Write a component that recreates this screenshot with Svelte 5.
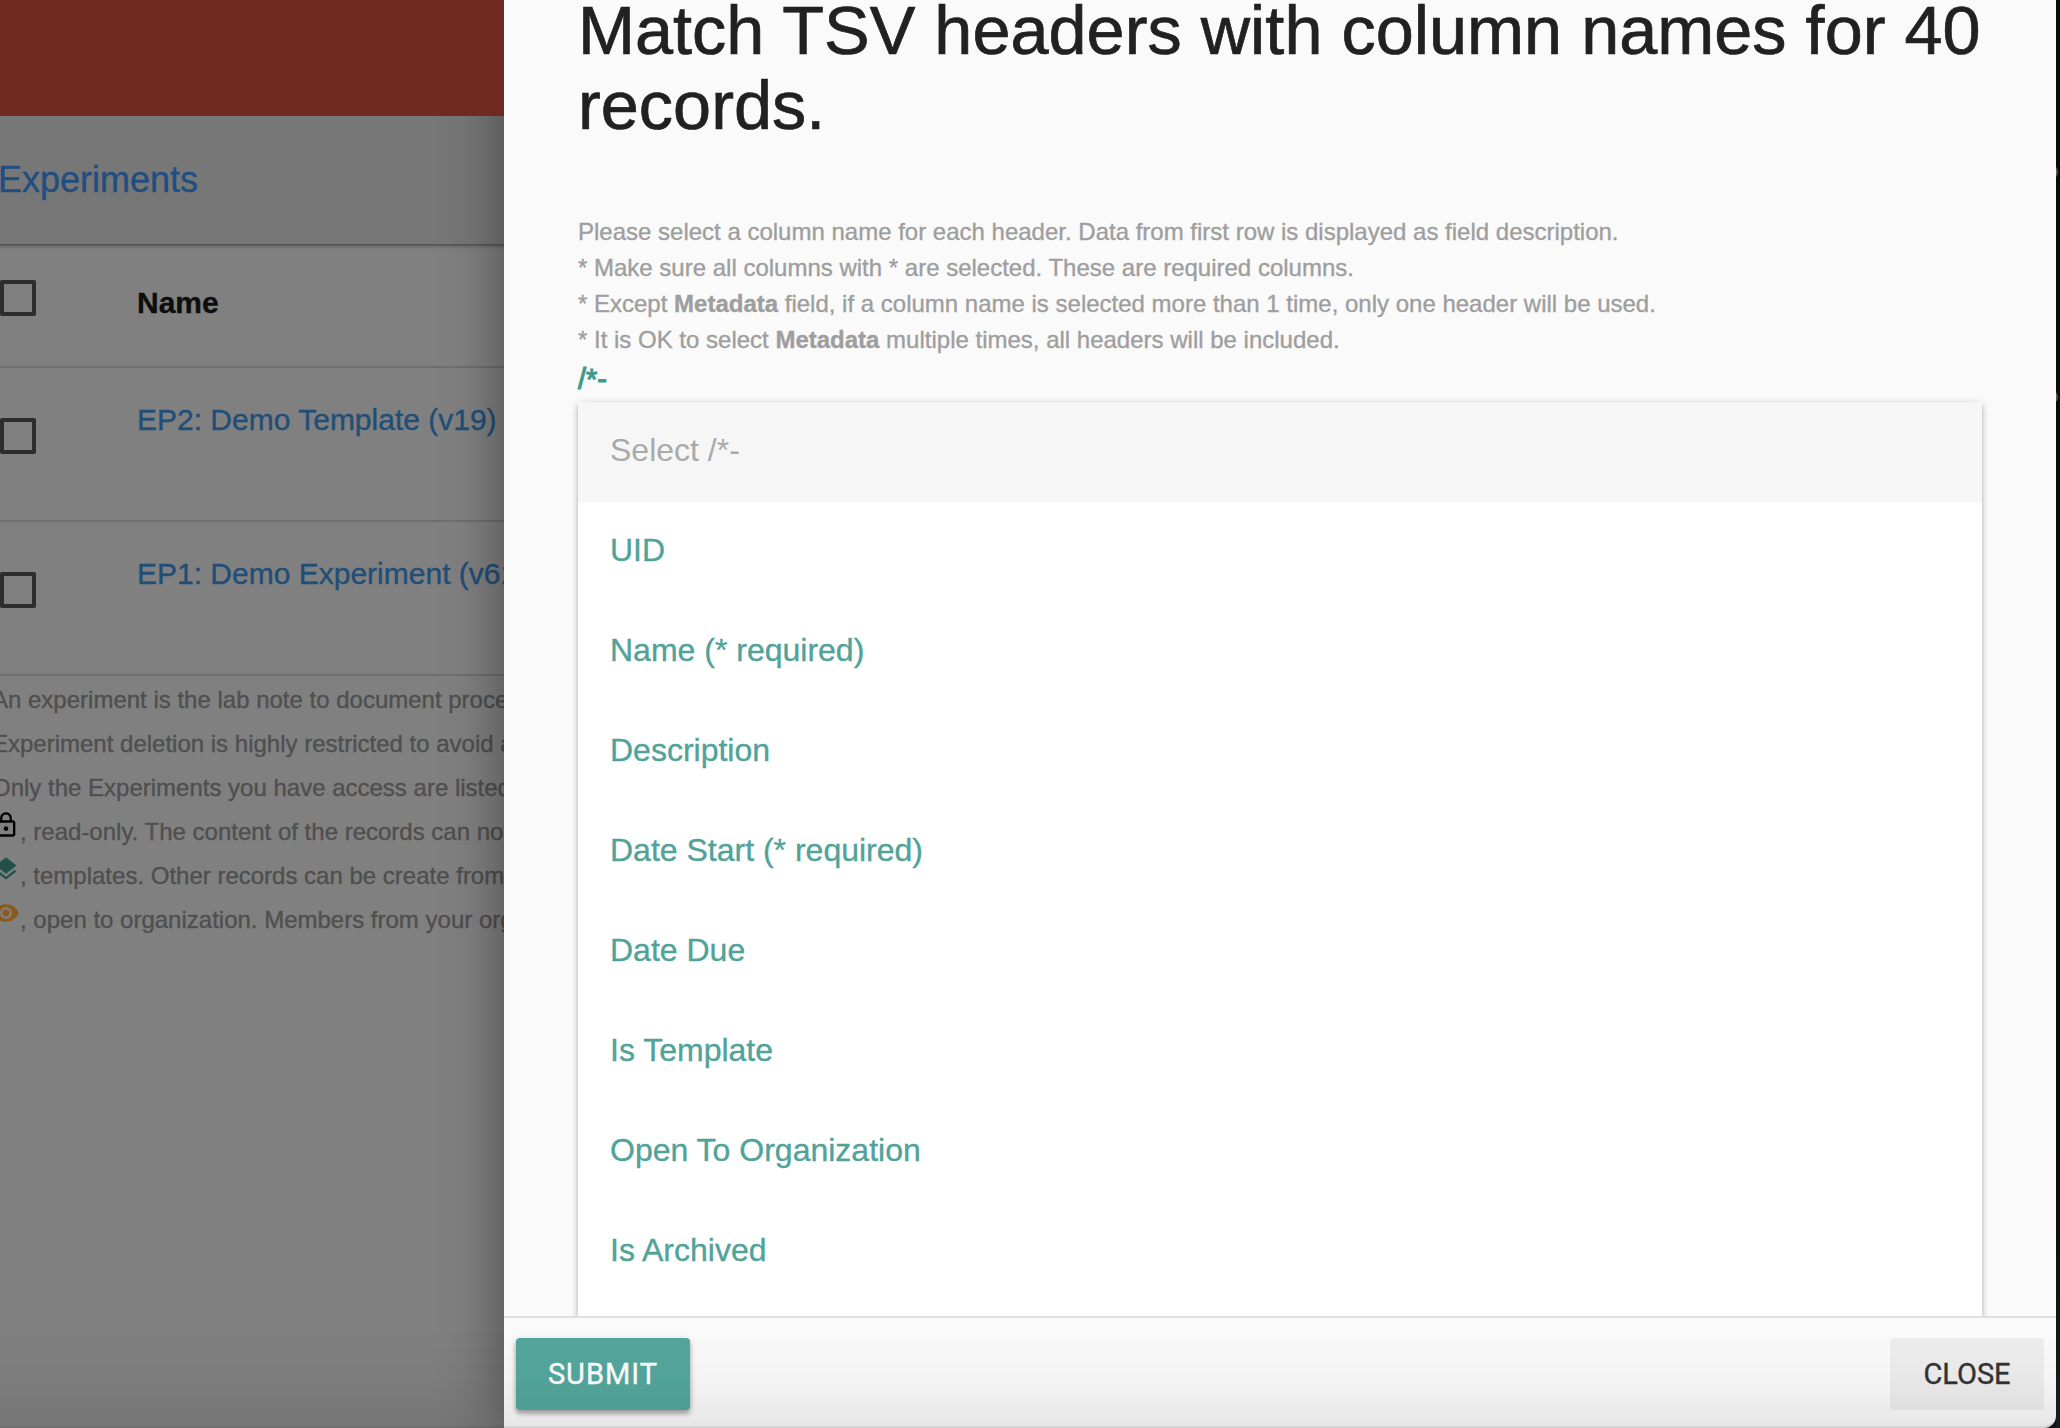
<script>
  const rows = ['EP2: Demo Template (v19)', 'EP1: Demo Experiment (v61)'];
  const notes = [
    'An experiment is the lab note to document procedures',
    'Experiment deletion is highly restricted to avoid any',
    'Only the Experiments you have access are listed.'
  ];
  const legend = [
    { icon: 'lock', text: ', read-only. The content of the records can not' },
    { icon: 'layers', text: ', templates. Other records can be create from' },
    { icon: 'eye', text: ', open to organization. Members from your org' }
  ];
  const options = [
    'UID', 'Name (* required)', 'Description', 'Date Start (* required)',
    'Date Due', 'Is Template', 'Open To Organization', 'Is Archived'
  ];
</script>

<div class="window">
  <div class="page">
    <header class="banner"></header>
    <nav class="crumbs"><a class="crumb">Experiments</a></nav>
    <main>
      <div class="row head">
        <span class="box"></span>
        <span class="title">Name</span>
      </div>
      {#each rows as row}
        <div class="row">
          <span class="box"></span>
          <a class="title">{row}</a>
        </div>
      {/each}
      <div class="notes">
        {#each notes as note}<p>{note}</p>{/each}
        {#each legend as item}
          <p class="legend">
            <svg class={item.icon} viewBox="0 0 24 24">
              {#if item.icon === 'lock'}
                <path d="M12 17c1.1 0 2-.9 2-2s-.9-2-2-2-2 .9-2 2 .9 2 2 2zm6-9h-1V6c0-2.76-2.24-5-5-5S7 3.24 7 6v2H6c-1.1 0-2 .9-2 2v10c0 1.1.9 2 2 2h12c1.1 0 2-.9 2-2V10c0-1.1-.9-2-2-2zM8.9 6c0-1.71 1.39-3.1 3.1-3.1s3.1 1.39 3.1 3.1v2H8.9V6zM18 20H6V10h12v10z" />
              {:else if item.icon === 'layers'}
                <path d="M11.99 18.54l-7.37-5.73L3 14.07l9 7 9-7-1.63-1.27-7.38 5.74zM12 16l7.36-5.73L21 9l-9-7-9 7 1.63 1.27L12 16z" />
              {:else}
                <path d="M12 4.5C7 4.5 2.73 7.61 1 12c1.73 4.39 6 7.5 11 7.5s9.27-3.11 11-7.5c-1.73-4.39-6-7.5-11-7.5zM12 17c-2.76 0-5-2.24-5-5s2.24-5 5-5 5 2.24 5 5-2.24 5-5 5zm0-8c-1.66 0-3 1.34-3 3s1.34 3 3 3 3-1.34 3-3-1.34-3-3-3z" />
              {/if}
            </svg><span>{item.text}</span>
          </p>
        {/each}
      </div>
    </main>
  </div>

  <section class="modal">
    <div class="content">
      <h4>Match TSV headers with column names for 40<br />records.</h4>
      <div class="help">
        <p>Please select a column name for each header. Data from first row is displayed as field description.</p>
        <p>* Make sure all columns with * are selected. These are required columns.</p>
        <p>* Except <b>Metadata</b> field, if a column name is selected more than 1 time, only one header will be used.</p>
        <p>* It is OK to select <b>Metadata</b> multiple times, all headers will be included.</p>
      </div>
      <div class="label">/*-</div>
      <ul class="dropdown">
        <li class="disabled">Select /*-</li>
        {#each options as option}<li>{option}</li>{/each}
      </ul>
    </div>
    <footer>
      <button class="submit">SUBMIT</button>
      <button class="close">CLOSE</button>
    </footer>
  </section>
  <aside class="edge"><i></i><i></i></aside>
  <div class="fade"></div>
</div>

<style>
  :global(body) { margin: 0; background: #11100c; }
  .window {
    position: relative;
    display: grid;
    grid-template-columns: 504px 1552px 4px;
    width: 2060px;
    height: 1428px;
    overflow: hidden;
    background: #15151a;
    font-family: "Liberation Sans", Arial, sans-serif;
    -webkit-text-stroke: .35px currentColor;
  }
  p, h4, ul { margin: 0; padding: 0; font-weight: 400; }
  .page { min-width: 0; overflow: hidden; background: #808080; white-space: nowrap; }
  .banner { height: 116px; background: #702a22; position: relative; z-index: 1; }
  .crumbs {
    height: 128px;
    background: #777;
    margin: 0 -20px;
    padding: 0 20px;
    box-shadow: 0 2px 4px rgba(0, 0, 0, .32), 0 0 2px rgba(0, 0, 0, .4);
    display: flex;
    align-items: center;
    position: relative;
  }
  .crumb { font-size: 36px; color: #214e80; margin-left: -2px; }
  .row {
    box-sizing: border-box;
    height: 154px;
    border-bottom: 2px solid #6f6f6f;
    display: flex;
    align-items: flex-start;
    padding-top: 37px;
  }
  .row.head { height: 124px; padding-top: 36px; }
  .box {
    box-sizing: border-box;
    width: 36px;
    height: 36px;
    border: 4px solid #2d2d2d;
    border-radius: 2px;
    flex: none;
  }
  .row .box { margin-top: 13px; }
  .head .box { margin-top: 0; }
  .title { margin-left: 101px; font-size: 30px; line-height: 30px; color: #214e77; }
  .head .title { font-weight: 700; color: #0e0e0e; margin-top: 8px; }
  .notes { padding-top: 2px; margin-left: -8px; font-size: 24px; line-height: 44px; color: #4f4f4f; }
  .notes p { height: 44px; }
  .legend { display: flex; }
  .legend svg { width: 28px; height: 28px; flex: none; margin-top: 1px; }
  .lock { fill: #000; }
  .layers { fill: #215048; }
  .eye { fill: #8b5a1b; }

  .modal {
    position: relative;
    display: flex;
    flex-direction: column;
    height: 1428px;
    background: #fafafa;
    border-bottom-right-radius: 12px;
    box-shadow: 0 8px 60px rgba(0, 0, 0, .42);
  }
  .content { height: 1316px; overflow: hidden; padding: 0 74px; box-sizing: border-box; }
  h4 {
    font-size: 68.4px;
    line-height: 75px;
    letter-spacing: .03px;
    color: #212121;
    white-space: nowrap;
    margin-top: -7px;
    height: 221px;
    -webkit-text-stroke-width: .7px;
  }
  .help { font-size: 24px; line-height: 36px; color: #9e9e9e; white-space: nowrap; }
  .label { font-size: 29px; height: 44px; line-height: 43px; color: #3f998c; -webkit-text-stroke-width: 1.1px; }
  .dropdown {
    list-style: none;
    height: 1300px;
    background: #fff;
    box-shadow: 0 4px 4px rgba(0, 0, 0, .14), 0 2px 8px rgba(0, 0, 0, .22);
  }
  .dropdown li { height: 100px; line-height: 97px; padding-left: 32px; font-size: 32px; color: #51a298; }
  .dropdown .disabled { background: #f6f6f6; color: #aaa; -webkit-text-stroke-width: 0; }
  footer {
    box-sizing: border-box;
    height: 112px;
    border-top: 2px solid #e0e0e0;
    padding: 20px 12px;
    display: flex;
    justify-content: space-between;
  }
  button {
    height: 72px;
    padding: 0;
    border: 0;
    border-radius: 4px;
    font: 29px/72px Roboto, "Liberation Sans", sans-serif;
  }
  .submit {
    width: 174px;
    background: #54a79d;
    color: #fff;
    letter-spacing: 1px;
    box-shadow: 0 4px 4px rgba(0, 0, 0, .2), 0 2px 6px rgba(0, 0, 0, .22);
  }
  .close { width: 154px; background: #eee; color: #343434; }
  .edge { position: relative; background: linear-gradient(#0c0b07, #0c0b07 80%, #1b1b1e); }
  .edge i {
    position: absolute;
    left: -12px;
    top: 165px;
    width: 14px;
    height: 14px;
    border-radius: 50%;
    background: #555;
    clip-path: inset(0 0 0 12px);
  }
  .edge i + i { top: 390px; }
  .fade {
    position: absolute;
    left: 0;
    right: 4px;
    bottom: 0;
    height: 100px;
    box-sizing: border-box;
    border-bottom: 2px solid rgba(0, 0, 0, .14);
    border-bottom-right-radius: 12px;
    background: linear-gradient(rgba(0, 0, 0, 0), rgba(0, 0, 0, .025) 50%, rgba(0, 0, 0, .075));
    pointer-events: none;
  }
</style>
